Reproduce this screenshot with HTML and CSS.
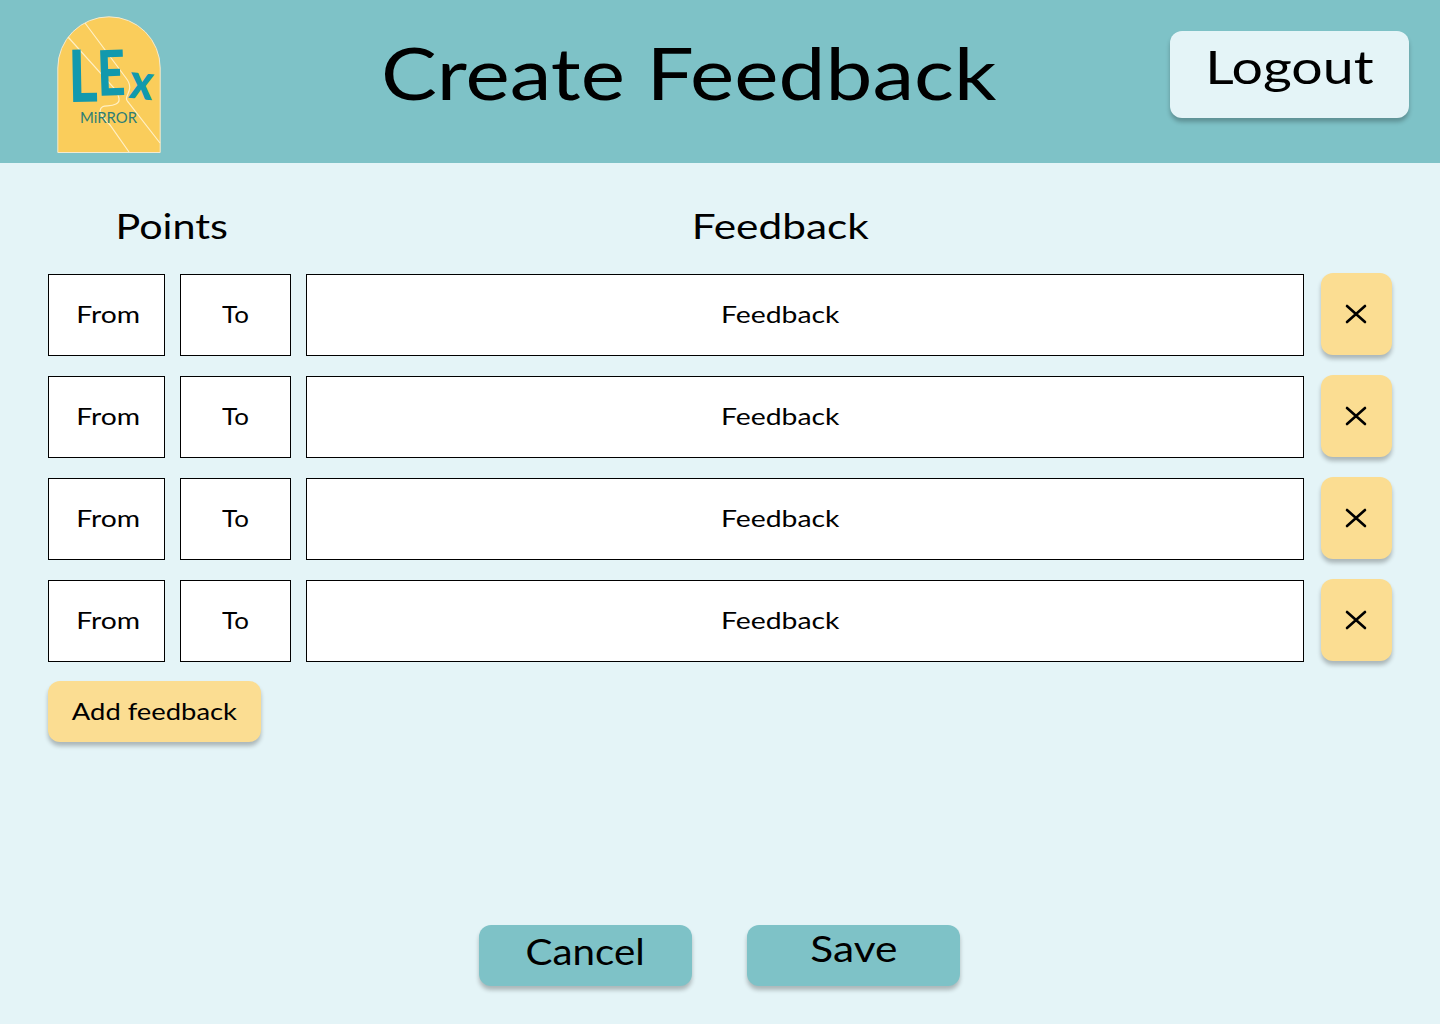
FILE: index.html
```html
<!DOCTYPE html>
<html lang="en">
<head>
<meta charset="utf-8">
<title>Create Feedback</title>
<link rel="stylesheet" href="styles.css">
</head>
<body>
<header class="topbar">
  <svg class="logo" viewBox="0 0 104 138" role="img" aria-label="LEx Mirror">
    <path class="logo-arch" d="M.8 136.5V52A51.2 51.2 0 0 1 103.200 52V136.500Z"/>
    <path class="logo-line" d="M11 21L57 72Q66 85 59 88C52 92 44 87 43 95Q44 100 53 109L72 136"/>
    <path class="logo-line" d="M28 7L69 62C79 75 65 80 71 86L103 127"/>
    <g class="logo-word">
      <text x="12" y="86" font-size="72" textLength="29" lengthAdjust="spacingAndGlyphs" transform="rotate(-1 15 86)">L</text>
      <text x="41" y="80" font-size="63" textLength="28" lengthAdjust="spacingAndGlyphs" transform="rotate(-2 44 81)">E</text>
      <text x="72" y="83" font-size="50" textLength="24" lengthAdjust="spacingAndGlyphs" transform="rotate(6 84 72)">x</text>
    </g>
    <text class="logo-sub" x="23" y="107" textLength="57" lengthAdjust="spacingAndGlyphs">MiRROR</text>
  </svg>
  <h1 class="title"><span class="wide">Create Feedback</span></h1>
  <button class="btn logout"><span class="wide">Logout</span></button>
</header>
<main class="content">
  <div class="headings">
    <h2 class="heading heading-points"><span class="wide">Points</span></h2>
    <h2 class="heading heading-feedback"><span class="wide">Feedback</span></h2>
  </div>
  <div class="rows">
    <div class="row">
      <div class="field from"><span class="wide">From</span></div><div class="field to"><span class="wide">To</span></div><div class="field feedback"><span class="wide">Feedback</span></div>
      <button class="btn remove" aria-label="Remove"><svg class="cross" viewBox="0 0 22 20"><path d="M2 2L20 18M20 2L2 18"/></svg></button>
    </div>
    <div class="row">
      <div class="field from"><span class="wide">From</span></div><div class="field to"><span class="wide">To</span></div><div class="field feedback"><span class="wide">Feedback</span></div>
      <button class="btn remove" aria-label="Remove"><svg class="cross" viewBox="0 0 22 20"><path d="M2 2L20 18M20 2L2 18"/></svg></button>
    </div>
    <div class="row">
      <div class="field from"><span class="wide">From</span></div><div class="field to"><span class="wide">To</span></div><div class="field feedback"><span class="wide">Feedback</span></div>
      <button class="btn remove" aria-label="Remove"><svg class="cross" viewBox="0 0 22 20"><path d="M2 2L20 18M20 2L2 18"/></svg></button>
    </div>
    <div class="row">
      <div class="field from"><span class="wide">From</span></div><div class="field to"><span class="wide">To</span></div><div class="field feedback"><span class="wide">Feedback</span></div>
      <button class="btn remove" aria-label="Remove"><svg class="cross" viewBox="0 0 22 20"><path d="M2 2L20 18M20 2L2 18"/></svg></button>
    </div>
  </div>
  <button class="btn add"><span class="wide">Add feedback</span></button>
  <div class="actions">
    <button class="btn action cancel"><span class="wide">Cancel</span></button>
    <button class="btn action save"><span class="wide">Save</span></button>
  </div>
</main>
</body>
</html>
```
FILE: styles.css
```css
* { box-sizing: border-box; }
body {
  --stretch: 1.18;
  margin: 0;
  height: 1024px;
  display: flex;
  flex-direction: column;
  background: #e4f4f7;
  color: #000;
  font-family: Lato, "Open Sans", sans-serif;
}
h1, h2 { margin: 0; font-weight: 400; white-space: nowrap; }
.wide { display: inline-block; transform: scaleX(var(--stretch)); }
.topbar {
  height: 163px;
  flex: none;
  display: flex;
  align-items: flex-start;
  background: #7ec2c7;
  padding: 0 31px 0 57px;
}
.logo { width: 104px; height: 138px; margin-top: 16px; flex: none; }
.logo-arch { fill: #facd5b; stroke: #f3ead0; stroke-width: 1; }
.logo-line { fill: none; stroke: #fff0c4; stroke-width: 1.2; }
.logo-word { fill: #1299ad; font-weight: 900; }
.logo-sub { fill: #2e7d75; font-size: 16px; font-weight: 400; }
.title {
  width: 620px;
  margin: 28px 0 0 218px;
  font-size: 71px;
  line-height: 90px;
  text-align: center;
}
.btn {
  border: 0;
  padding: 0;
  border-radius: 12px;
  box-shadow: 0 4px 4px rgba(0, 0, 0, .25);
  color: #000;
  font-family: inherit;
  display: flex;
  justify-content: center;
  white-space: nowrap;
}
.logout {
  width: 239px;
  height: 87px;
  margin: 31px 0 0 auto;
  background: #e4f4f7;
  font-size: 47px;
  line-height: 71px;
}
.content { flex: 1; display: flex; flex-direction: column; padding: 38px 48px 38px; }
.headings { height: 72px; display: flex; }
.heading { font-size: 35px; line-height: 48px; text-align: center; }
.heading-points { width: 248px; }
.heading-feedback { width: 968px; --stretch: 1.21; }
.rows { display: flex; flex-direction: column; gap: 20px; padding-top: 1px; }
.row { display: flex; height: 82px; }
.field {
  height: 82px;
  border: 1px solid #000;
  background: #fff;
  font-size: 24px;
  line-height: 78px;
  text-align: center;
}
.from { width: 117px; margin-right: 15px; padding-left: 4px; }
.to { width: 111px; margin-right: 15px; --stretch: 1.08; }
.feedback { width: 998px; margin-right: 17px; padding-right: 50px; }
.remove { width: 71px; height: 82px; margin-top: -1px; align-items: center; background: #fbdd92; }
.cross { width: 22px; height: 20px; margin-right: 1px; }
.cross path { fill: none; stroke: #000; stroke-width: 2.6; stroke-linecap: round; }
.add {
  --stretch: 1.14;
  width: 213px;
  height: 61px;
  margin-top: 19px;
  background: #fbdd92;
  font-size: 24px;
  line-height: 59px;
}
.actions { margin-top: auto; display: flex; justify-content: center; gap: 55px; padding-right: 1px; }
.action { width: 213px; height: 61px; background: #7ec2c7; font-size: 36px; }
.cancel { line-height: 53px; --stretch: 1.12; }
.save { line-height: 47px; }
```
